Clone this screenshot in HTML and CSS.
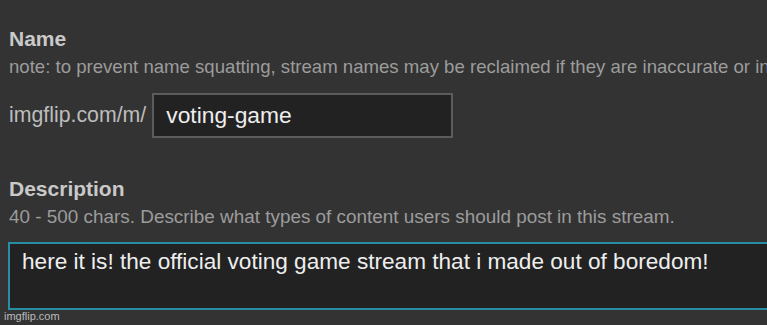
FILE: index.html
```html
<!DOCTYPE html>
<html lang="en">
<head>
  <meta charset="UTF-8" />
  <title>Edit Stream</title>
  <link rel="stylesheet" href="styles.css">
</head>
<body>

  <div class="form">
    <div class="label">Name</div>
    <div class="note note-name">note: to prevent name squatting, stream names may be reclaimed if they are inaccurate or inactive.</div>
    <div class="url-row">
      <span class="prefix">imgflip.com/m/</span>
      <input class="name-input" type="text" value="voting-game" />
    </div>

    <div class="label label-desc">Description</div>
    <div class="note">40 - 500 chars. Describe what types of content users should post in this stream.</div>
    <textarea class="desc-input">here it is! the official voting game stream that i made out of boredom!</textarea>
  </div>

  <div class="watermark">imgflip.com</div>

</body>
</html>
```

FILE: styles.css
```css
* {
  box-sizing: border-box;
}

body {
  margin: 0;
  background: #333;
  font-family: 'Liberation Sans', Arial, sans-serif;
  overflow: hidden;
  height: 325px;
  position: relative;
}

.form {
  padding: 27px 0 0 9px;
  overflow: hidden;
}

.label {
  font-size: 21px;
  line-height: 24px;
  font-weight: bold;
  color: #c9c9c9;
}

.label-desc {
  margin-top: 39px;
}

.note {
  margin-top: 4.6px;
  font-size: 18.9px;
  line-height: 22px;
  color: #9c9c9c;
  white-space: nowrap;
}

.note-name {
  font-size: 18.6px;
}

.url-row {
  display: flex;
  align-items: center;
  margin-top: 15.4px;
}

.prefix {
  font-size: 21.3px;
  color: #bdbdbd;
  margin-right: 6px;
}

.name-input {
  width: 301px;
  height: 45px;
  padding: 0 0 0 12px;
  background: #222;
  border: 2px solid #5c5c5c;
  color: #eee;
  font-family: inherit;
  font-size: 22.8px;
  outline: none;
}

.desc-input {
  display: block;
  margin: 14.4px 0 0 -1px;
  width: 800px;
  height: 68px;
  padding: 5px 12px;
  background: #222;
  border: 2px solid #2b8ca6;
  color: #eee;
  font-family: inherit;
  font-size: 22.6px;
  line-height: 26px;
  resize: none;
  outline: none;
}

.watermark {
  position: absolute;
  left: 4px;
  bottom: 3px;
  font-size: 11px;
  color: #bbb;
}
```
